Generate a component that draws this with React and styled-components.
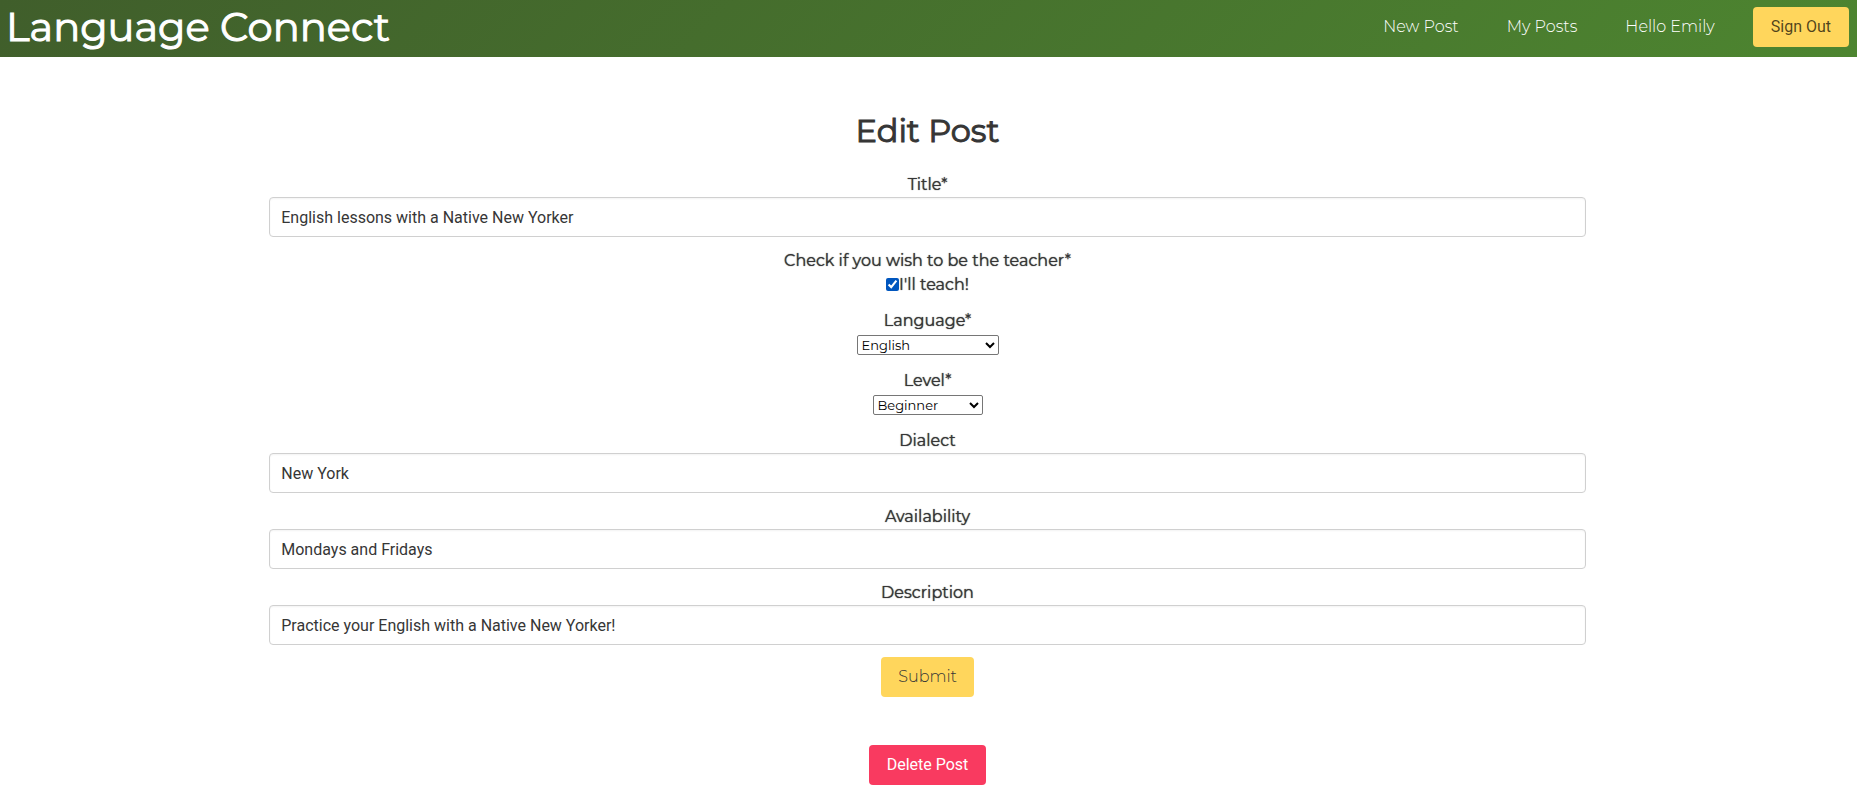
import React from "react";
import styled, { createGlobalStyle } from "styled-components";

const display = `Montserrat, Inter, "Liberation Sans", sans-serif`;
const system = `Roboto, "Liberation Sans", sans-serif`;

const GlobalStyle = createGlobalStyle`
  *, *::before, *::after { box-sizing: border-box; }
  body {
    margin: 0;
    background: #fff;
    color: #363636;
    font-family: ${display};
    font-size: 16px;
    line-height: 24px;
  }
`;

const Header = styled.header`
  display: flex;
  align-items: center;
  justify-content: space-between;
  padding: 0 8px 3px 6px;
  height: 57px;
  background: linear-gradient(135deg, #405e2b, #4d8530);
`;

const Brand = styled.a`
  color: #fff;
  font-size: 40px;
  font-weight: 400;
  line-height: 52px;
  -webkit-text-stroke: 1px currentColor;
  text-decoration: none;
`;

const Nav = styled.nav`
  display: flex;
  align-items: center;
  gap: 48px;
`;

const NavLink = styled.a`
  color: #fff;
  font-size: 16px;
  font-weight: 300;
  text-decoration: none;
`;

const Account = styled.div`
  display: flex;
  align-items: center;
  gap: 38px;
`;

const tones = {
  warning: { background: "#ffd65c", color: "rgba(0, 0, 0, 0.7)" },
  danger: { background: "#f93a60", color: "#fff" },
};

const Button = styled.button`
  height: 40px;
  padding: 0 18px;
  border: 0;
  border-radius: 4px;
  background: ${({ $tone }) => tones[$tone].background};
  color: ${({ $tone }) => tones[$tone].color};
  font-family: ${system};
  font-size: 16px;
  font-weight: 400;
  line-height: 24px;
  cursor: pointer;
`;

const SubmitButton = styled(Button)`
  padding: 0 17px;
  color: #363636;
  font-family: ${display};
  font-weight: 300;
`;

const Main = styled.main`
  width: 71%;
  margin: 0 auto;
  padding: 56px 2px 16px 0;
  text-align: center;
`;

const Title = styled.h1`
  margin: 0 0 24px;
  font-size: 32px;
  font-weight: 400;
  line-height: 36px;
  -webkit-text-stroke: 1px currentColor;
`;

const Form = styled.form`
  display: flex;
  flex-direction: column;
  align-items: center;
  gap: 12px;
  margin-bottom: 48px;
`;

const Field = styled.div`
  display: flex;
  flex-direction: column;
  align-items: center;
  width: 100%;
`;

const Label = styled.label`
  font-size: 16px;
  font-weight: 400;
  text-shadow: 0 0 1px currentColor;
`;

const Control = styled.div`
  display: flex;
  align-items: center;
  justify-content: center;
  height: 24px;
`;

const TextInput = styled.input`
  width: 100%;
  height: 40px;
  padding: 0 11px;
  border: 1px solid #d0d0d0;
  border-radius: 4px;
  background: #fff;
  box-shadow: inset 0 1px 2px rgba(10, 10, 10, 0.05);
  color: #363636;
  font: 400 16px/24px ${system};
`;

const Checkbox = styled.input`
  width: 13px;
  height: 13px;
  margin: 0 0 2px;
  accent-color: #0056be;
`;

const Select = styled.select`
  width: ${({ $width }) => $width}px;
  height: 20px;
  border: 1px solid #767676;
  border-radius: 2px;
  background: #fff;
  color: #000;
  font: 400 13px ${display};
`;

function TextField({ id, label, value }) {
  return (
    <Field>
      <Label htmlFor={id}>{label}</Label>
      <TextInput id={id} type="text" defaultValue={value} />
    </Field>
  );
}

function SelectField({ id, label, options, width }) {
  return (
    <Field>
      <Label htmlFor={id}>{label}</Label>
      <Control>
        <Select id={id} $width={width}>
          {options.map((option) => (
            <option key={option}>{option}</option>
          ))}
        </Select>
      </Control>
    </Field>
  );
}

export default function App() {
  return (
    <>
      <GlobalStyle />
      <Header>
        <Brand href="#">Language Connect</Brand>
        <Nav>
          <NavLink href="#new">New Post</NavLink>
          <NavLink href="#posts">My Posts</NavLink>
          <Account>
            <NavLink href="#profile">Hello Emily</NavLink>
            <Button type="button" $tone="warning">Sign Out</Button>
          </Account>
        </Nav>
      </Header>
      <Main>
        <Title>Edit Post</Title>
        <Form onSubmit={(event) => event.preventDefault()}>
          <TextField id="title" label="Title*" value="English lessons with a Native New Yorker" />
          <Field>
            <Label htmlFor="teacher">Check if you wish to be the teacher*</Label>
            <Control>
              <Checkbox id="teacher" type="checkbox" defaultChecked />
              <Label htmlFor="teacher">I'll teach!</Label>
            </Control>
          </Field>
          <SelectField id="language" label="Language*" options={["English"]} width={142} />
          <SelectField id="level" label="Level*" options={["Beginner"]} width={110} />
          <TextField id="dialect" label="Dialect" value="New York" />
          <TextField id="availability" label="Availability" value="Mondays and Fridays" />
          <TextField id="description" label="Description" value="Practice your English with a Native New Yorker!" />
          <SubmitButton type="submit" $tone="warning">Submit</SubmitButton>
        </Form>
        <Button type="button" $tone="danger">Delete Post</Button>
      </Main>
    </>
  );
}
